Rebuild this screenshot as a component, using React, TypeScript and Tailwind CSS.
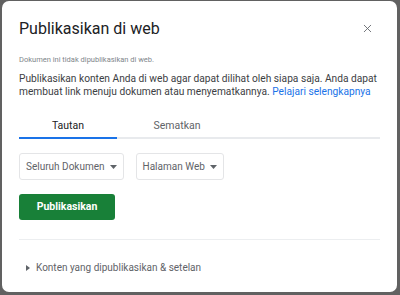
import { X } from 'lucide-react'

const FONT = { fontFamily: 'Roboto, "Noto Sans", Arial, sans-serif' }

function Caret() {
  return (
    <svg width="7" height="4" viewBox="0 0 7 4" className="ml-[5px] mt-[1px]">
      <path d="M0 0 L7 0 L3.5 4 Z" fill="#5f6368" />
    </svg>
  )
}

function Select({ label }: { label: string }) {
  return (
    <button
      type="button"
      className="flex items-center h-[27px] pl-[6px] pr-[6px] border border-[#e4e5e7] rounded-[3px] text-[10px] text-[#5f6368] bg-white"
    >
      {label}
      <Caret />
    </button>
  )
}

export default function App() {
  return (
    <div className="w-[400px] h-[295px] bg-[#616161] pt-px pl-[2px] pr-[3px] pb-[3px]" style={FONT}>
      <div className="bg-white rounded-[7px] h-full px-[17px] flex flex-col">
        <header className="flex items-center justify-between pt-[18px]">
          <h1 className="text-[16px] leading-[20px] text-[#202124]">Publikasikan di web</h1>
          <X size={13} strokeWidth={1.6} className="text-[#5f6368] mr-[6px] -mt-[2px]" />
        </header>

        <p className="mt-[15px] text-[7.5px] text-[#80868b]">Dokumen ini tidak dipublikasikan di web.</p>

        <p className="mt-[7px] text-[10.2px] leading-[13px] text-[#3c4043]">
          Publikasikan konten Anda di web agar dapat dilihat oleh siapa saja. Anda dapat membuat link menuju dokumen atau
          menyematkannya. <span className="text-[#1a73e8]">Pelajari selengkapnya</span>
        </p>

        <div className="mt-[20px] flex border-b-2 border-[#e8eaed]">
          <div className="w-[98px] -mb-[2px] border-b-2 border-[#1a73e8] text-center text-[10.5px] text-[#202124] pb-[3px]">
            Tautan
          </div>
          <div className="w-[120px] text-center text-[10.5px] text-[#5f6368] pb-[3px]">Sematkan</div>
        </div>

        <div className="mt-[14px] flex gap-[12px]">
          <Select label="Seluruh Dokumen" />
          <Select label="Halaman Web" />
        </div>

        <button
          type="button"
          className="mt-[14px] w-[96px] h-[26px] rounded-[3px] bg-[#188038] text-white text-[10.5px] font-bold"
        >
          Publikasikan
        </button>

        <div className="mt-[19px] border-t border-[#eceef0]" />

        <div className="mt-[20px] flex items-center text-[10px] text-[#5f6368]">
          <svg width="4" height="6" viewBox="0 0 4 6" className="ml-[7px] mr-[6px]">
            <path d="M0 0 L4 3 L0 6 Z" fill="#5f6368" />
          </svg>
          Konten yang dipublikasikan &amp; setelan
        </div>
      </div>
    </div>
  )
}
